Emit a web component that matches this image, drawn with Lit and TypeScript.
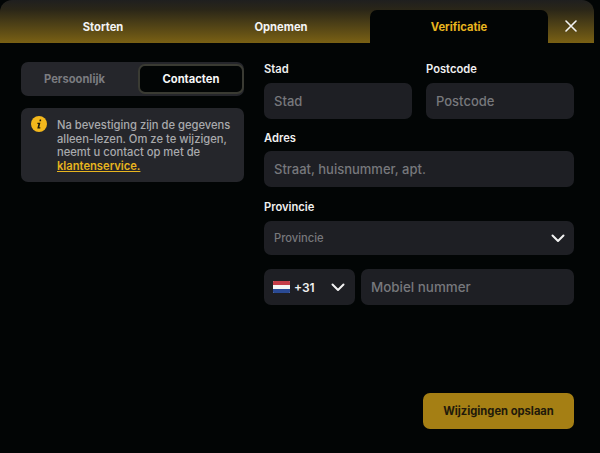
import { LitElement, html, css } from "lit";
import { customElement } from "lit/decorators.js";

const chevron = html`<svg class="chev" width="14" height="9" viewBox="0 0 14 9"><path d="M1.500 1.500 7 7l5.500-5.500" fill="none" stroke="#f2f2f2" stroke-width="2" stroke-linecap="round" stroke-linejoin="round"/></svg>`;

@customElement("app-root")
export class AppRoot extends LitElement {
  static styles = css`
    :host { display: block; width: 600px; height: 453px; background: #020505; font-family: Inter, "Liberation Sans", sans-serif; overflow: hidden; }
    * { box-sizing: border-box; }
    .panel { width: 594px; height: 453px; display: flex; flex-direction: column; }
    .head { height: 43px; flex: none; display: flex; padding: 10px 0 0 14px; border-radius: 12px 12px 0 0;
      background: linear-gradient(180deg, #1f1f1f 0%, #2a2618 22%, #7a6114 100%); }
    .tab { width: 178px; display: flex; align-items: center; justify-content: center; font-size: 11.200px; font-weight: 700; color: #f4f4f4; }
    .tab.on { background: #020505; color: #e8b51f; border-radius: 7px 7px 0 0; }
    .close { flex: 1; display: flex; align-items: center; justify-content: center; padding-bottom: 2px; }
    .body { flex: 1; display: flex; padding: 19px 20px 24px 21px; gap: 20px; }
    .left { width: 223px; flex: none; display: flex; flex-direction: column; gap: 12px; }
    .toggle { height: 34px; background: #25262b; border-radius: 7px; display: flex; padding: 2px 0 2px 2px; }
    .seg { flex: 1; display: flex; align-items: center; justify-content: center; font-size: 11.200px; font-weight: 700; color: #7b7c80; padding-right: 12px; }
    .seg.on { flex: none; width: 106px; color: #f6f6f6; background: #020505; border: 2px solid #3a3b33; border-radius: 7px; padding-right: 0; }
    .info { height: 74px; background: #25262b; border-radius: 7px; display: flex; gap: 10px; padding: 8px 10px 0 10px; font-size: 11.200px; line-height: 13.700px; color: #a9aaad; font-weight: 500; }
    .info svg { flex: none; }
    .info .txt { padding-top: 3px; }
    .info a { color: #e8b51f; text-decoration: underline; font-weight: 600; }
    .right { flex: 1; display: flex; flex-direction: column; }
    .row { display: flex; gap: 14px; }
    .fld { display: flex; flex-direction: column; }
    .row .fld { flex: 1; }
    label { font-size: 11.200px; font-weight: 600; color: #f0f0f0; line-height: 15px; height: 21px; }
    .inp { height: 36px; background: #1e1f24; border-radius: 7px; display: flex; align-items: center; padding: 0 10px; font-size: 13px; font-weight: 500; color: #77787c; }
    .sp1 { margin-top: 12px; }
    .sp1 label { height: 20px; }
    .sp2 { margin-top: 13px; }
    .sel { height: 34px; justify-content: space-between; font-size: 11.200px; padding-right: 9px; }
    .phone { display: flex; gap: 6px; margin-top: 14px; }
    .cc { width: 91px; flex: none; color: #f0f0f0; font-size: 12px; font-weight: 600; gap: 4px; padding: 0 10px 0 9px; }
    .cc .chev { margin-left: auto; }
    .num { flex: 1; font-size: 13.400px; }
    .foot { margin-top: auto; display: flex; justify-content: flex-end; }
    .save { width: 151px; height: 36px; background: #a57f14; border-radius: 7px; display: flex; align-items: center; justify-content: center; font-size: 11.200px; font-weight: 700; color: #21190a; }
  `;

  render() {
    return html`<div class="panel">
      <div class="head">
        <div class="tab">Storten</div>
        <div class="tab">Opnemen</div>
        <div class="tab on">Verificatie</div>
        <div class="close"><svg width="12" height="12" viewBox="0 0 12 12"><path d="M1 1l10 10M11 1 1 11" stroke="#f2f2f2" stroke-width="1.600" stroke-linecap="round"/></svg></div>
      </div>
      <div class="body">
        <div class="left">
          <div class="toggle"><div class="seg">Persoonlijk</div><div class="seg on">Contacten</div></div>
          <div class="info">
            <svg width="16" height="16" viewBox="0 0 16 16"><circle cx="8" cy="8" r="8" fill="#f4b81c"/><path d="M8.700 3.500h1.400v1.700H8.400zM6.400 6.700h3L8.300 11.200h1v1.200H6.300l1.100-4.500h-1z" fill="#1e1a0c"/></svg>
            <div class="txt">Na bevestiging zijn de gegevens alleen-lezen. Om ze te wijzigen, neemt u contact op met de <a>klantenservice.</a></div>
          </div>
        </div>
        <div class="right">
          <div class="row">
            <div class="fld"><label>Stad</label><div class="inp">Stad</div></div>
            <div class="fld"><label>Postcode</label><div class="inp">Postcode</div></div>
          </div>
          <div class="fld sp1"><label>Adres</label><div class="inp">Straat, huisnummer, apt.</div></div>
          <div class="fld sp2"><label>Provincie</label><div class="inp sel">Provincie ${chevron}</div></div>
          <div class="phone">
            <div class="inp cc">
              <svg width="17" height="12" viewBox="0 0 17 12"><rect width="17" height="12" rx="1" fill="#f4f4f4"/><path d="M0 4V1a1 1 0 0 1 1-1h15a1 1 0 0 1 1 1v3z" fill="#c43c48"/><path d="M0 8h17v3a1 1 0 0 1-1 1H1a1 1 0 0 1-1-1z" fill="#2a4a94"/></svg>
              +31 ${chevron}
            </div>
            <div class="inp num">Mobiel nummer</div>
          </div>
          <div class="foot"><div class="save">Wijzigingen opslaan</div></div>
        </div>
      </div>
    </div>`;
  }
}
